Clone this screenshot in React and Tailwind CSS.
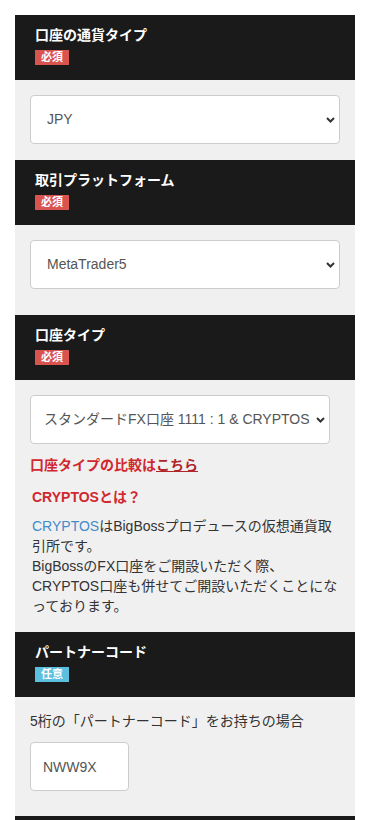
import React from "react";

const font = { fontFamily: '"Liberation Sans", "Noto Sans CJK JP", Arial, sans-serif' };

function Header({ title, badge, color }) {
  return (
    <div className="bg-[#1a1a1a] h-[65px] px-[20px] pt-[10px]">
      <div className="text-white font-bold text-[14px] leading-[20px]">{title}</div>
      <div className="mt-[5px] flex">
        <span className={`${color} text-white font-bold text-[11px] leading-[15px] h-[15px] px-[6px]`}>{badge}</span>
      </div>
    </div>
  );
}

function Select({ value, width, pad }) {
  return (
    <div className={`relative ${width}`}>
      <select
        defaultValue={value}
        className={`appearance-none w-full h-[49px] bg-white border border-[#ccc] rounded-[4px] ${pad} pr-[16px] text-[14px] text-[#555] outline-none whitespace-nowrap overflow-hidden`}
      >
        <option value={value}>{value}</option>
      </select>
      <svg className="absolute right-[5px] top-[22px] pointer-events-none" width="9" height="6" viewBox="0 0 9 6">
        <path d="M1 1 L4.5 4.5 L8 1" fill="none" stroke="#333" strokeWidth="2" />
      </svg>
    </div>
  );
}

export default function App() {
  return (
    <div className="w-[370px] bg-white pt-[15px] px-[15px]" style={font}>
      <Header title="口座の通貨タイプ" badge="必須" color="bg-[#d9534f]" />
      <div className="bg-[#f0f0f0] px-[15px] pt-[15px] pb-[16px]">
        <Select value="JPY" width="w-[310px]" pad="pl-[16px]" />
      </div>

      <Header title="取引プラットフォーム" badge="必須" color="bg-[#d9534f]" />
      <div className="bg-[#f0f0f0] px-[15px] pt-[15px] pb-[26px]">
        <Select value="MetaTrader5" width="w-[310px]" pad="pl-[16px]" />
      </div>

      <Header title="口座タイプ" badge="必須" color="bg-[#d9534f]" />
      <div className="bg-[#f0f0f0] px-[15px] pt-[15px] pb-[16px]">
        <Select value="スタンダードFX口座 1111 : 1 & CRYPTOS" width="w-[300px]" pad="pl-[13px]" />
        <div className="mt-[11px] text-[14px] leading-[20px] font-bold text-[#d0282e]">
          口座タイプの比較は<span className="underline text-[#b0242a]">こちら</span>
        </div>
        <div className="mt-[12px] pl-[2px] text-[14px] leading-[20px] font-bold text-[#d0282e]">CRYPTOSとは？</div>
        <p className="mt-[9px] pl-[2px] text-[14px] leading-[20px] text-[#333]">
          <span className="text-[#428bca]">CRYPTOS</span>はBigBossプロデュースの仮想通貨取引所です。
          <br />
          BigBossのFX口座をご開設いただく際、CRYPTOS口座も併せてご開設いただくことになっております。
        </p>
      </div>

      <Header title="パートナーコード" badge="任意" color="bg-[#5bc0de]" />
      <div className="bg-[#f0f0f0] px-[15px] pt-[14px] pb-[25px]">
        <div className="text-[14px] leading-[20px] text-[#333]">5桁の「パートナーコード」をお持ちの場合</div>
        <input
          defaultValue="NWW9X"
          className="mt-[11px] block w-[99px] h-[49px] bg-white border border-[#ccc] rounded-[4px] px-[12px] text-[14px] text-[#555] outline-none"
        />
      </div>
      <div className="bg-[#1a1a1a] h-[65px]" />
    </div>
  );
}
